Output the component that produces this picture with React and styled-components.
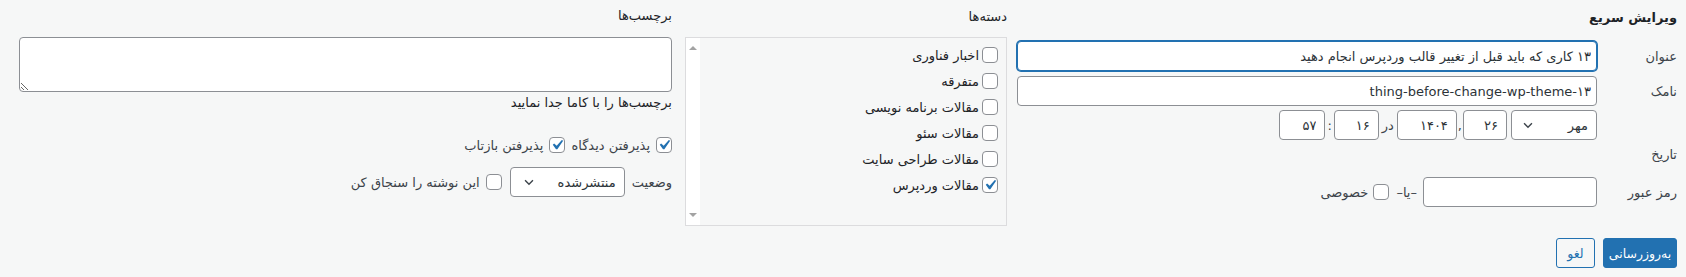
import React from "react";
import styled, { createGlobalStyle } from "styled-components";

const GlobalStyle = createGlobalStyle`
  html, body {
    margin: 0;
    padding: 0;
    background: #f6f7f7;
  }
  body {
    font-family: "DejaVu Sans", sans-serif;
    font-size: 13px;
    color: #3c434a;
  }
  * {
    box-sizing: border-box;
  }
`;

const Wrap = styled.div`
  direction: rtl;
  width: 1686px;
  height: 277px;
  display: flex;
  align-items: flex-start;
  padding: 0 9px 0 19px;
  background: #f6f7f7;
`;

const Column = styled.div`
  flex: ${(p) => (p.$width ? "none" : "1")};
  width: ${(p) => (p.$width ? `${p.$width}px` : "auto")};
  margin-left: ${(p) => p.$gap || 0}px;
  display: flex;
  flex-direction: column;
`;

const Heading = styled.div`
  height: 20px;
  line-height: 20px;
  margin-top: ${(p) => p.$top}px;
  font-weight: ${(p) => (p.$bold ? "bold" : "normal")};
  color: #1d2327;
  font-size: 13px;
`;

const Row = styled.div`
  display: flex;
  align-items: center;
  height: ${(p) => p.$h || 30}px;
  margin-top: ${(p) => p.$top || 0}px;
`;

const Label = styled.span`
  flex: none;
  width: 80px;
  color: #3c434a;
  font-size: 13px;
`;

const TextInput = styled.input`
  flex: ${(p) => (p.$w ? "none" : "1")};
  width: ${(p) => (p.$w ? `${p.$w}px` : "auto")};
  height: 30px;
  margin: 0;
  padding: 0 5px;
  border: 1px solid ${(p) => (p.$focus ? "#2271b1" : "#8c8f94")};
  border-radius: 4px;
  box-shadow: ${(p) => (p.$focus ? "0 0 0 1px #2271b1" : "none")};
  background: #fff;
  color: #2c3338;
  font-family: inherit;
  font-size: 13px;
  outline: none;
  direction: rtl;
`;

const SmallField = styled(TextInput)`
  padding: 0 8px;
`;

const Sep = styled.span`
  flex: none;
  padding: 0 ${(p) => p.$pad || 2}px;
  color: #3c434a;
`;

const SelectWrap = styled.div`
  position: relative;
  flex: none;
  width: ${(p) => p.$w}px;
  height: 30px;
  margin-left: ${(p) => p.$gap || 0}px;
  margin-right: ${(p) => p.$mr || 0}px;
`;

const Select = styled.select`
  appearance: none;
  width: 100%;
  height: 30px;
  margin: 0;
  padding: 0 8px 0 24px;
  border: 1px solid #8c8f94;
  border-radius: 4px;
  background: #fff;
  color: #2c3338;
  font-family: inherit;
  font-size: 13px;
  direction: rtl;
  outline: none;
`;

const Chevron = styled.svg`
  position: absolute;
  left: ${(p) => p.$left || 9}px;
  top: 8px;
  width: 14px;
  height: 14px;
  pointer-events: none;
`;

const Text = styled.span`
  flex: none;
  margin-right: ${(p) => p.$mr || 0}px;
  color: #3c434a;
  font-size: 13px;
  white-space: nowrap;
`;

const CheckBox = styled.span`
  position: relative;
  flex: none;
  width: 16px;
  height: 16px;
  margin-right: ${(p) => p.$mr || 0}px;
  border: 1px solid #8c8f94;
  border-radius: 4px;
  background: #fff;
`;

const Tick = styled.svg`
  position: absolute;
  left: -3px;
  top: -3px;
  width: 20px;
  height: 20px;
`;

const Check = ({ checked, mr }) => (
  <CheckBox $mr={mr}>
    {checked && (
      <Tick viewBox="0 0 20 20">
        <path
          d="M14.83 4.89l1.34.94-5.81 8.38H9.02L5.78 9.67l1.34-1.25 2.57 2.4z"
          fill="#2271b1"
        />
      </Tick>
    )}
  </CheckBox>
);

const Arrow = ({ left }) => (
  <Chevron viewBox="0 0 16 16" $left={left}>
    <polyline
      points="3.5,6 8,10.5 12.5,6"
      fill="none"
      stroke="#3c434a"
      strokeWidth="1.6"
    />
  </Chevron>
);

const Buttons = styled.div`
  display: flex;
  gap: 8px;
  margin-top: 31px;
`;

const Button = styled.button`
  height: 30px;
  min-width: ${(p) => p.$min || 0}px;
  margin: 0;
  padding: 0 4px;
  border: 1px solid #2271b1;
  border-radius: 3px;
  background: ${(p) => (p.$primary ? "#2271b1" : "#f6f7f7")};
  color: ${(p) => (p.$primary ? "#fff" : "#2271b1")};
  font-family: inherit;
  font-size: 12.5px;
  cursor: pointer;
`;

const CatBox = styled.div`
  display: flex;
  height: 189px;
  margin-top: 10px;
  border: 1px solid #dcdcde;
  background: #f6f7f7;
`;

const CatList = styled.ul`
  flex: 1;
  list-style: none;
  margin: 0;
  padding: 4px 8px 0 0;
`;

const CatItem = styled.li`
  display: flex;
  align-items: center;
  gap: 3px;
  height: 26px;
  color: #1d2327;
  font-size: 13px;
`;

const ScrollBar = styled.div`
  flex: none;
  width: 14px;
  display: flex;
  flex-direction: column;
  justify-content: space-between;
  align-items: center;
  padding: 8px 0 8px;
  background: #fff;
`;

const ArrowUp = styled.span`
  width: 0;
  height: 0;
  border-left: 4px solid transparent;
  border-right: 4px solid transparent;
  border-bottom: 4px solid #a3a3a3;
`;

const ArrowDown = styled(ArrowUp)`
  border-bottom: none;
  border-top: 4px solid #a3a3a3;
`;

const TagArea = styled.textarea`
  display: block;
  width: 100%;
  height: 55px;
  margin: 11px 0 0;
  padding: 4px 8px;
  border: 1px solid #8c8f94;
  border-radius: 4px;
  background: #fff;
  font-family: inherit;
  font-size: 13px;
  direction: rtl;
  outline: none;
`;

const Hint = styled.div`
  height: 20px;
  line-height: 20px;
  margin-top: 1px;
  color: #1d2327;
  font-size: 13px;
`;

const categories = [
  { name: "اخبار فناوری", checked: false },
  { name: "متفرقه", checked: false },
  { name: "مقالات برنامه نویسی", checked: false },
  { name: "مقالات سئو", checked: false },
  { name: "مقالات طراحی سایت", checked: false },
  { name: "مقالات وردپرس", checked: true },
];

const App = () => {
  return (
    <>
      <GlobalStyle />
      <Wrap>
        <Column $width={660} $gap={10}>
          <Heading $top={8} $bold>
            ویرایش سریع
          </Heading>
          <Row $top={13}>
            <Label>عنوان</Label>
            <TextInput
              $focus
              defaultValue="۱۳ کاری که باید قبل از تغییر قالب وردپرس انجام دهید"
            />
          </Row>
          <Row $top={5}>
            <Label>نامک</Label>
            <TextInput defaultValue="thing-before-change-wp-theme-۱۳" />
          </Row>
          <Row $top={4}>
            <Label />
            <SelectWrap $w={86} $gap={4}>
              <Select defaultValue="mehr">
                <option value="mehr">مهر</option>
              </Select>
              <Arrow left={10} />
            </SelectWrap>
            <SmallField $w={44} defaultValue="۲۶" />
            <Sep $pad={1}>,</Sep>
            <SmallField $w={60} defaultValue="۱۴۰۴" />
            <Sep $pad={3}>در</Sep>
            <SmallField $w={45} defaultValue="۱۶" />
            <Sep $pad={2}>:</Sep>
            <SmallField $w={46} defaultValue="۵۷" />
          </Row>
          <Row $top={4} $h={20}>
            <Label>تاریخ</Label>
          </Row>
          <Row $top={13}>
            <Label>رمز عبور</Label>
            <TextInput $w={174} />
            <Text $mr={6}>–یا–</Text>
            <Check mr={7} />
            <Text $mr={5}>خصوصی</Text>
          </Row>
          <Buttons>
            <Button $primary $min={74}>
              به‌روزرسانی
            </Button>
            <Button $min={39}>لغو</Button>
          </Buttons>
        </Column>

        <Column $width={322} $gap={13}>
          <Heading $top={7}>دسته‌ها</Heading>
          <CatBox>
            <CatList>
              {categories.map((c, idx) => (
                <CatItem key={idx}>
                  <Check checked={c.checked} />
                  {c.name}
                </CatItem>
              ))}
            </CatList>
            <ScrollBar>
              <ArrowUp />
              <ArrowDown />
            </ScrollBar>
          </CatBox>
        </Column>

        <Column>
          <Heading $top={6}>برچسب‌ها</Heading>
          <TagArea />
          <Hint>برچسب‌ها را با کاما جدا نمایید</Hint>
          <Row $top={22} $h={20}>
            <Check checked />
            <Text $mr={6}>پذیرفتن دیدگاه</Text>
            <Check checked mr={6} />
            <Text $mr={6}>پذیرفتن بازتاب</Text>
          </Row>
          <Row $top={12}>
            <Text>وضعیت</Text>
            <SelectWrap $w={115} $mr={7}>
              <Select defaultValue="publish">
                <option value="publish">منتشرشده</option>
              </Select>
              <Arrow left={12} />
            </SelectWrap>
            <Check mr={8} />
            <Text $mr={6}>این نوشته را سنجاق کن</Text>
          </Row>
        </Column>
      </Wrap>
    </>
  );
};

export default App;
